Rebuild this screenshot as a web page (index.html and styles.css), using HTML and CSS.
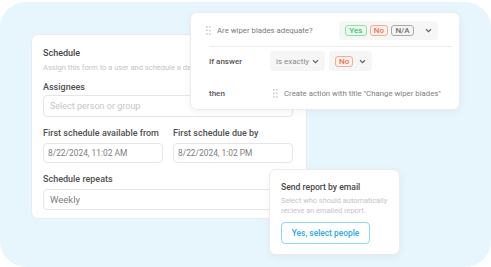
FILE: index.html
```html
<!DOCTYPE html>
<html lang="en">
<head>
    <meta charset="UTF-8">
    <meta name="viewport" content="width=device-width, initial-scale=1.0">
    <title>Schedule</title>
    <link rel="stylesheet" href="styles.css">
</head>
<body>

    <div class="stage">
        <div class="card schedule">
            <div class="title">Schedule</div>
            <div class="sub">Assign this form to a user and schedule a date for it to be completed</div>
            <div class="label">Assignees</div>
            <div class="field tall placeholder">Select person or group</div>
            <div class="pair">
                <div class="col">
                    <div class="label gap">First schedule available from</div>
                    <div class="field date">8/22/2024, 11:02 AM</div>
                </div>
                <div class="col">
                    <div class="label gap">First schedule due by</div>
                    <div class="field date">8/22/2024, 1:02 PM</div>
                </div>
            </div>
            <div class="label gap">Schedule repeats</div>
            <div class="field repeat">Weekly</div>
        </div>

        <div class="card logic">
            <div class="question">
                <svg class="handle" width="5" height="9" viewBox="0 0 5 9"><g fill="#cfcfcf"><rect x="0" y="0" width="1.6" height="1.6"/><rect x="3" y="0" width="1.6" height="1.6"/><rect x="0" y="3.6" width="1.6" height="1.6"/><rect x="3" y="3.6" width="1.6" height="1.6"/><rect x="0" y="7.2" width="1.6" height="1.6"/><rect x="3" y="7.2" width="1.6" height="1.6"/></g></svg>
                <span class="qtext">Are wiper blades adequate?</span>
                <div class="answers">
                    <span class="badge yes">Yes</span>
                    <span class="badge no">No</span>
                    <span class="badge na">N/A</span>
                    <svg class="chev" width="7" height="5" viewBox="0 0 7 5"><path d="M1 1.2 L3.5 3.6 L6 1.2" fill="none" stroke="#666" stroke-width="1.2"/></svg>
                </div>
            </div>
            <div class="rule">
                <span class="rlabel">If answer</span>
                <div class="sel wide">is exactly
                    <svg class="chev" width="7" height="5" viewBox="0 0 7 5"><path d="M1 1.2 L3.5 3.6 L6 1.2" fill="none" stroke="#666" stroke-width="1.2"/></svg>
                </div>
                <div class="sel">
                    <span class="badge no">No</span>
                    <svg class="chev" width="7" height="5" viewBox="0 0 7 5"><path d="M1 1.2 L3.5 3.6 L6 1.2" fill="none" stroke="#666" stroke-width="1.2"/></svg>
                </div>
            </div>
            <div class="rule then">
                <span class="rlabel">then</span>
                <svg class="handle" width="5" height="9" viewBox="0 0 5 9"><g fill="#cfcfcf"><rect x="0" y="0" width="1.6" height="1.6"/><rect x="3" y="0" width="1.6" height="1.6"/><rect x="0" y="3.6" width="1.6" height="1.6"/><rect x="3" y="3.6" width="1.6" height="1.6"/><rect x="0" y="7.2" width="1.6" height="1.6"/><rect x="3" y="7.2" width="1.6" height="1.6"/></g></svg>
                <span class="action">Create action with title "Change wiper blades"</span>
            </div>
        </div>

        <div class="card email">
            <div class="etitle">Send report by email</div>
            <div class="esub">Select who should automatically recieve an emailed report.</div>
            <button class="ebtn">Yes, select people</button>
        </div>
    </div>

</body>
</html>
```

FILE: styles.css
```css
body {
    margin: 0;
    background: #fff;
    font-family: Roboto, "Noto Sans", sans-serif;
    color: #4a4a4a;
}
.stage {
    position: relative;
    width: 491px;
    height: 265px;
    margin-top: 2px;
    background: #e7f6fd;
    border-radius: 26px;
    overflow: hidden;
}
.card {
    background: #fff;
    border: 1px solid #ececec;
    border-radius: 7px;
    box-sizing: border-box;
}

/* schedule card */
.schedule {
    margin-left: 31px;
    position: relative;
    top: 32px;
    width: 276px;
    height: 185px;
    padding: 11px 13px 0 11px;
}
.title {
    font-size: 9px;
    line-height: 14px;
    font-weight: 500;
    color: #484848;
}
.sub {
    width: 147px;
    overflow: hidden;
    margin-top: 2px;
    font-size: 7.5px;
    line-height: 12px;
    color: #c4c4c4;
    white-space: nowrap;
}
.label {
    margin-top: 6px;
    font-size: 9px;
    line-height: 14px;
    font-weight: 500;
    color: #515151;
    white-space: nowrap;
}
.label.gap {
    margin-top: 9px;
}
.field {
    margin-top: 3px;
    height: 20px;
    box-sizing: border-box;
    border: 1px solid #e6e6e6;
    border-radius: 4px;
    padding: 0 5px;
    font-size: 9px;
    line-height: 18px;
    color: #7d7d7d;
}
.field.date {
    font-size: 8.4px;
    padding-left: 4px;
}
.field.tall {
    margin-top: 1px;
    height: 22px;
    line-height: 20px;
    padding-left: 6px;
}
.field.repeat {
    height: 21px;
    line-height: 19px;
    padding-left: 6px;
    font-size: 9.5px;
}
.placeholder {
    color: #c6c6c6;
}
.pair {
    display: grid;
    grid-template-columns: 1fr 1fr;
    gap: 10px;
}

/* logic card */
.logic {
    position: absolute;
    left: 190px;
    top: 10px;
    width: 270px;
    height: 98px;
    padding: 8px 7px 0 18px;
    box-shadow: 0 2px 8px rgba(0, 0, 0, 0.05);
}
.question {
    display: flex;
    align-items: center;
    height: 19px;
    margin-right: 14px;
    padding-bottom: 6px;
    margin-left: -3px;
}
.question .handle {
    margin-right: 6px;
}
.qtext {
    flex: 1;
    font-size: 7.8px;
    color: #7a7a7a;
}
.answers {
    display: flex;
    align-items: center;
    gap: 3px;
    height: 19px;
    padding: 0 6px;
    background: #f6f6f6;
    border-radius: 4px;
}
.answers .chev {
    margin-left: 8px;
}
.badge {
    display: inline-block;
    height: 9px;
    box-sizing: content-box;
    padding: 0 3px;
    border: 1px solid;
    border-radius: 3px;
    font-size: 8px;
    line-height: 9px;
    font-weight: 500;
}
.yes {
    min-width: 14px;
    text-align: center;
    color: #3fc26a;
    background: #eafaef;
    border-color: #8fe0a9;
}
.no {
    min-width: 10px;
    text-align: center;
    color: #f2704b;
    background: #fff1ec;
    border-color: #f8ab94;
}
.na {
    min-width: 15px;
    text-align: center;
    color: #707070;
    background: #f4f4f4;
    border-color: #a8a8a8;
}
.rule {
    display: flex;
    align-items: center;
    gap: 4px;
    border-top: 1px solid #ececec;
    padding-top: 4px;
}
.rlabel {
    width: 57px;
    font-size: 8px;
    font-weight: 500;
    color: #555;
}
.sel {
    display: flex;
    align-items: center;
    justify-content: space-between;
    width: 43px;
    height: 20px;
    box-sizing: border-box;
    padding: 0 6px;
    background: #f6f6f6;
    border-radius: 4px;
    font-size: 8px;
    color: #8a8a8a;
    white-space: nowrap;
}
.sel.wide {
    width: 55px;
}
.rule.then {
    border-top: none;
    padding-top: 14px;
    height: 16px;
}
.then .handle {
    margin-left: 3px;
    margin-right: 2px;
}
.action {
    font-size: 7.8px;
    color: #808080;
    white-space: nowrap;
}

/* email card */
.email {
    position: absolute;
    left: 269px;
    top: 167px;
    width: 131px;
    height: 86px;
    padding: 10px 11px 0;
    box-shadow: 0 2px 8px rgba(0, 0, 0, 0.05);
}
.etitle {
    font-size: 8.6px;
    line-height: 14px;
    font-weight: 500;
    color: #474747;
}
.esub {
    margin-top: 2px;
    font-size: 7.4px;
    line-height: 9.5px;
    color: #c4c4c4;
}
.ebtn {
    display: block;
    margin-top: 7px;
    width: 89px;
    height: 22px;
    padding: 0;
    background: #fff;
    border: 1.5px solid #8dd6f7;
    border-radius: 4px;
    font-family: inherit;
    font-size: 8.4px;
    font-weight: 500;
    color: #2ba8ea;
}
```
